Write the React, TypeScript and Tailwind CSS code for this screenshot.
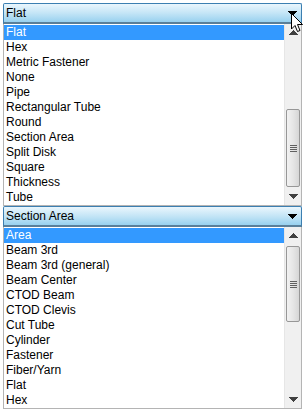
import React from 'react';

const first = ['Flat', 'Hex', 'Metric Fastener', 'None', 'Pipe', 'Rectangular Tube', 'Round', 'Section Area', 'Split Disk', 'Square', 'Thickness', 'Tube'];
const second = ['Area', 'Beam 3rd', 'Beam 3rd (general)', 'Beam Center', 'CTOD Beam', 'CTOD Clevis', 'Cut Tube', 'Cylinder', 'Fastener', 'Fiber/Yarn', 'Flat', 'Hex'];

function Arrow({ up, color = '#000' }: { up?: boolean; color?: string }) {
  return (
    <svg width="9" height="5" viewBox="0 0 9 5" className={up ? 'rotate-180' : ''}>
      <path d="M0 0h9v1H0zM1 1h7v1H1zM2 2h5v1H2zM3 3h3v1H3zM4 4h1v1H4z" fill={color} />
    </svg>
  );
}

function Combo({ value }: { value: string }) {
  return (
    <div className="h-[21px] flex items-center justify-between border border-[#3c7fb1] border-b-2 border-b-[#5a7f99] rounded-t-[2px] bg-gradient-to-b from-[#eaf6fd] via-[#c4e5f6] to-[#98d1ef] pl-[2px] pr-[4px]">
      <span className="text-[12px] leading-[15px] text-black">{value}</span>
      <Arrow />
    </div>
  );
}

function Scrollbar({ thumbTop, thumbHeight }: { thumbTop: number; thumbHeight: number }) {
  return (
    <div className="w-[17px] flex flex-col bg-[#f0f0f0] border-l border-[#e6e6e6]">
      <div className="h-[17px] flex items-center justify-center">
        <Arrow up color="#404040" />
      </div>
      <div className="flex-1 relative">
        <div
          className="absolute left-[1px] right-[1px] rounded-[2px] border border-[#979797] bg-gradient-to-r from-[#f2f2f2] via-[#e6e6e6] to-[#d6d6d6] flex items-center justify-center"
          style={{ top: thumbTop, height: thumbHeight }}
        >
          <div className="flex flex-col gap-[1px]">
            <div className="w-[7px] h-[1px] bg-[#606060]" />
            <div className="w-[7px] h-[1px] bg-[#606060]" />
            <div className="w-[7px] h-[1px] bg-[#606060]" />
            <div className="w-[7px] h-[1px] bg-[#606060]" />
          </div>
        </div>
      </div>
      <div className="h-[17px] flex items-center justify-center">
        <Arrow color="#404040" />
      </div>
    </div>
  );
}

function List({ items, thumbTop, thumbHeight }: { items: string[]; thumbTop: number; thumbHeight: number }) {
  return (
    <div className="flex border border-[#b4b4b4] border-t-0 bg-white">
      <div className="flex-1 flex flex-col pt-[1px]">
        {items.map((t, i) => (
          <div
            key={t + i}
            className={`h-[15px] pl-[2px] text-[12px] leading-[15px] ${i === 0 ? 'bg-[#3399ff] text-white' : 'text-black'}`}
          >
            {t}
          </div>
        ))}
      </div>
      <Scrollbar thumbTop={thumbTop} thumbHeight={thumbHeight} />
    </div>
  );
}

export default function App() {
  return (
    <div className="w-[304px] h-[411px] bg-white relative pl-[3px] pr-[2px] pt-[3px]" style={{ fontFamily: '"Liberation Sans", Arial, sans-serif' }}>
      <Combo value="Flat" />
      <List items={first} thumbTop={68} thumbHeight={78} />
      <Combo value="Section Area" />
      <List items={second} thumbTop={2} thumbHeight={76} />
      {/* mouse pointer */}
      <svg className="absolute left-[291px] top-[13px]" width="13" height="20" viewBox="0 0 13 20">
        <path d="M0.5 0.5 L0.5 16 L4 12.5 L6.5 18.5 L9 17.5 L6.5 11.5 L11.5 11.5 Z" fill="#fff" stroke="#000" strokeWidth="1" />
      </svg>
    </div>
  );
}
